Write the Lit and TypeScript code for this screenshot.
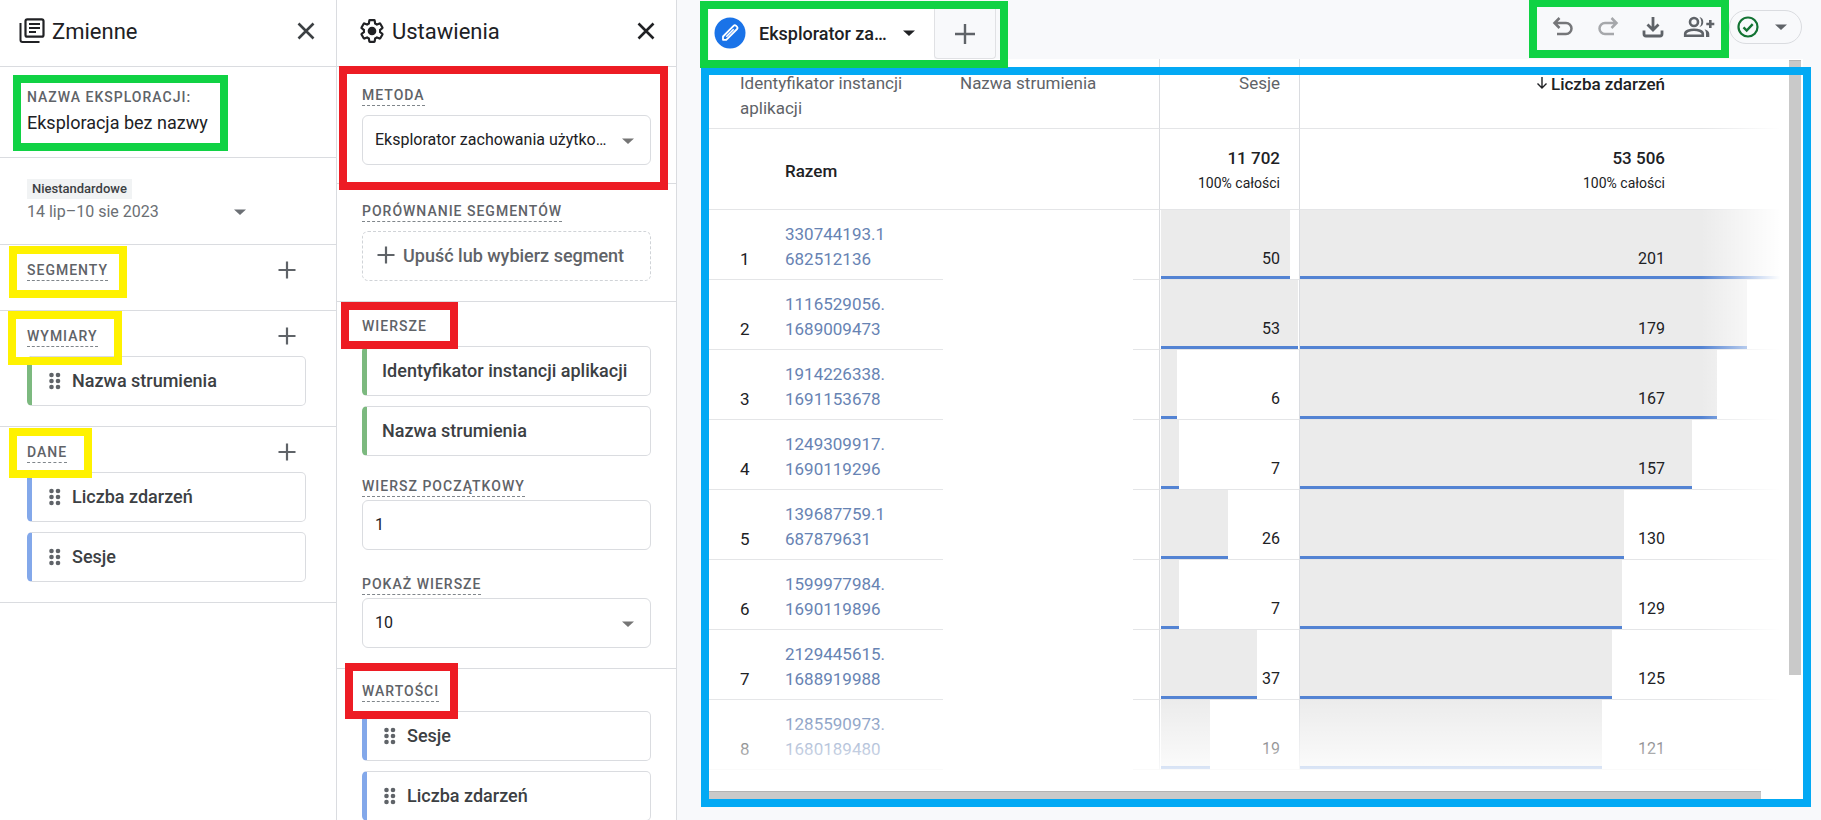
import { LitElement, html, css, svg, nothing } from "lit";
import { customElement, property } from "lit/decorators.js";

const icon = (size: number, box: string, body: unknown) =>
  html`<svg width=${size} height=${size} viewBox=${box} fill="none" aria-hidden="true">${body}</svg>`;

const closeIcon = icon(18, "0 0 18 18", svg`<path d="M1.5 1.5l15 15M16.5 1.5l-15 15" stroke="currentColor" stroke-width="2.6"/>`);
const plusIcon = icon(18, "0 0 18 18", svg`<path d="M9 .5v17M.5 9h17" stroke="currentColor" stroke-width="2.2"/>`);
const plusLarge = icon(22, "0 0 22 22", svg`<path d="M11 1v20M1 11h20" stroke="currentColor" stroke-width="2.4"/>`);
const caret = icon(12, "0 0 12 12", svg`<path d="M0 3.5h12l-6 5.5z" fill="currentColor"/>`);
const dragIcon = html`<svg width="12" height="18" viewBox="0 0 12 18" aria-hidden="true">
  ${[3, 9, 15].map((y) => svg`<circle cx="2.5" cy=${y} r="2.3" fill="#5f6368"/><circle cx="9" cy=${y} r="2.3" fill="#5f6368"/>`)}
</svg>`;
const libraryIcon = icon(26, "0 0 26 26", svg`
  <path d="M1.5 5v17a2 2 0 0 0 2 2H20.5" stroke="#202124" stroke-width="2"/>
  <rect x="6.5" y="1.3" width="18" height="17.4" rx="1.8" stroke="#202124" stroke-width="2.2"/>
  <path d="M10 6h11M10 10h11M10 14h7" stroke="#202124" stroke-width="2"/>`);
const gearIcon = icon(26, "0 0 24 24", svg`
  <path d="M19.43 12.98c.04-.32.07-.64.07-.98 0-.34-.03-.66-.07-.98l2.11-1.65c.19-.15.24-.42.12-.64l-2-3.46c-.09-.16-.26-.25-.44-.25-.06 0-.12.01-.17.03l-2.49 1c-.52-.4-1.08-.73-1.69-.98l-.38-2.65C14.46 2.18 14.25 2 14 2h-4c-.25 0-.46.18-.49.42l-.38 2.65c-.61.25-1.17.59-1.69.98l-2.49-1c-.06-.02-.12-.03-.18-.03-.17 0-.34.09-.43.25l-2 3.46c-.13.22-.07.49.12.64l2.11 1.65c-.04.32-.07.65-.07.98 0 .33.03.66.07.98l-2.11 1.65c-.19.15-.24.42-.12.64l2 3.46c.09.16.26.25.44.25.06 0 .12-.01.17-.03l2.49-1c.52.4 1.08.73 1.69.98l.38 2.65c.03.24.24.42.49.42h4c.25 0 .46-.18.49-.42l.38-2.65c.61-.25 1.17-.59 1.69-.98l2.49 1c.06.02.12.03.18.03.17 0 .34-.09.43-.25l2-3.46c.12-.22.07-.49-.12-.64z" stroke="#202124" stroke-width="2"/>
  <circle cx="12" cy="12" r="4" fill="#202124"/>`);
const pencilIcon = icon(32, "0 0 32 32", svg`
  <circle cx="16" cy="16" r="15.5" fill="#1a73e8"/>
  <path d="M9 22.8v-3.3L19.8 8.7a1.5 1.5 0 0 1 2.1 0l1.2 1.2a1.5 1.5 0 0 1 0 2.1L12.3 22.8z" fill="#1a73e8" stroke="#fff" stroke-width="1.8" stroke-linejoin="round"/>
  <path d="M12.3 19.7l7.4-7.4" stroke="#fff" stroke-width="1.6"/>`);
const undoIcon = icon(22, "0 0 22 22", svg`<path d="M7.5 2L2.5 7l5 5M2.5 7h11.5a5.5 5.5 0 0 1 0 11H5" stroke="#757679" stroke-width="2.5"/>`);
const redoIcon = icon(22, "0 0 22 22", svg`<path d="M14.5 2l5 5-5 5M19.5 7H8a5.5 5.5 0 0 0 0 11h9" stroke="#a6a8ab" stroke-width="2.5"/>`);
const downloadIcon = icon(22, "0 0 22 22", svg`<path d="M11 1v13M5.500 8.500l5.500 5.500 5.500-5.500M2 14.500v3.500a2 2 0 0 0 2 2h14a2 2 0 0 0 2-2v-3.500" stroke="#5f6368" stroke-width="2.8"/>`);
const shareIcon = html`<svg width="32" height="22" viewBox="0 0 32 22" fill="none" aria-hidden="true">
  <circle cx="11" cy="6" r="4" stroke="#5f6368" stroke-width="2.6"/>
  <path d="M2.2 19.8v-2c0-2.600 5-4.100 8.800-4.100s8.800 1.500 8.800 4.100v2z" stroke="#5f6368" stroke-width="2.6"/>
  <path d="M16.500 1a5.200 5.200 0 0 1 0 10a7.600 7.600 0 0 0 0-10zM21.500 13.300c2.800 1 4.800 2.400 4.800 4.500V21H23v-3.200c0-1.800-.5-3.200-1.500-4.500z" fill="#5f6368"/>
  <path d="M27.300 4v8M23.300 8h8" stroke="#5f6368" stroke-width="2.6"/>
</svg>`;
const checkIcon = icon(22, "0 0 22 22", svg`<circle cx="11" cy="11" r="9.5" stroke="#137333" stroke-width="2.2"/><path d="M6.5 11.3l3.2 3.2 6-6.3" stroke="#137333" stroke-width="2.4"/>`);
const sortIcon = icon(12, "0 0 12 12", svg`<path d="M6 0v10.5M1.500 6.500L6 11l4.500-4.500" stroke="#202124" stroke-width="1.4"/>`);

const base = css`
  * { box-sizing: border-box; }
  button, input, select { font: inherit; color: inherit; margin: 0; }
  button { background: none; border: 0; padding: 0; cursor: pointer; }
  svg { display: block; flex: none; }
  h2 { margin: 0; }
`;

@customElement("field-chip")
class FieldChip extends LitElement {
  @property() label = "";
  @property() kind: "dimension" | "metric" = "dimension";
  @property({ type: Boolean }) handle = false;

  static styles = [base, css`
    :host { display: block; }
    .chip {
      display: flex; align-items: center; gap: 11px; width: 100%; height: 50px;
      padding: 0 0 1px 15px; border: 1px solid #dadce0; border-left-width: 5px;
      border-radius: 5px; background: #fff; color: #3c4043;
      font-size: 18px; font-weight: 500; white-space: nowrap;
    }
    .dimension { border-left-color: #7cb97f; }
    .metric { border-left-color: #83a8ea; }
    .handle { padding-left: 17px; }
  `];

  render() {
    return html`<button class="chip ${this.kind} ${this.handle ? "handle" : ""}">
      ${this.handle ? dragIcon : nothing}${this.label}
    </button>`;
  }
}

interface Row { id: [string, string]; sessions: number; events: number; }

const rows: Row[] = [
  { id: ["330744193.1", "682512136"], sessions: 50, events: 201 },
  { id: ["1116529056.", "1689009473"], sessions: 53, events: 179 },
  { id: ["1914226338.", "1691153678"], sessions: 6, events: 167 },
  { id: ["1249309917.", "1690119296"], sessions: 7, events: 157 },
  { id: ["139687759.1", "687879631"], sessions: 26, events: 130 },
  { id: ["1599977984.", "1690119896"], sessions: 7, events: 129 },
  { id: ["2129445615.", "1688919988"], sessions: 37, events: 125 },
  { id: ["1285590973.", "1680189480"], sessions: 19, events: 121 },
];
const sessionsScale = 53;
const eventsScale = 196;

@customElement("data-grid")
class DataGrid extends LitElement {
  static styles = [base, css`
    :host {
      position: relative; display: grid; grid-template-columns: minmax(0, 1fr) 12px;
      grid-template-rows: minmax(0, 1fr) 8px; flex: 1; min-height: 0;
      padding-right: 2px; background: #fff;
    }
    .viewport { position: relative; overflow: hidden; }
    table { width: 100%; border-collapse: separate; border-spacing: 0; table-layout: fixed; font-size: 17px; line-height: 25px; color: #202124; }
    .c-num { width: 76px; }
    .c-id { width: 158px; }
    .c-name { width: 216px; }
    .c-sessions { width: 140px; }
    th, td { padding: 0; text-align: left; font-weight: 400; vertical-align: top; border-bottom: 1px solid #e4e5e7; }
    th:nth-last-child(-n+2), td:nth-last-child(-n+2) { border-left: 1px solid #dadce0; text-align: right; }
    thead th { height: 70px; padding-top: 12px; color: #5f6368; }
    thead .first { padding-left: 31px; padding-right: 20px; }
    thead .name { padding-left: 17px; }
    .sessions { padding-right: 19px; }
    .events { padding-right: 124px; }
    thead .sorted { color: #202124; font-weight: 500; }
    .sort { display: inline-flex; align-items: flex-start; gap: 3px; }
    .sort svg { margin-top: 5px; }
    .total > * { height: 81px; }
    .total .label { padding-top: 30px; font-weight: 500; }
    .total td:nth-last-child(-n+2) { padding-top: 17px; }
    .sum { font-weight: 500; }
    .share { font-size: 14px; }
    .row > td { height: 70px; }
    .row .num { padding: 37px 0 0 31px; }
    .row .id { padding-top: 12px; }
    .row .id a { color: #6783b3; text-decoration: none; }
    .row .blank { border-bottom: 0; background: linear-gradient(#e4e5e7, #e4e5e7) right bottom / 26px 1px no-repeat; }
    .row .measure { padding: 0; }
    .cell { display: grid; height: 69px; overflow: hidden; }
    .bar { grid-area: 1 / 1; background: #ebebeb; border-bottom: 3px solid #5383d3; }
    .value { grid-area: 1 / 1; padding-top: 36px; font-size: 16px; }
    .in-sessions .cell { padding: 0 1px; }
    .in-sessions .value { padding-right: 18px; }
    .in-events .value { padding-right: 124px; }
    .fade-right { position: absolute; inset: 0 0 0 auto; width: 88px; background: linear-gradient(90deg, #fff0, #fff 90%); }
    .fade-bottom { position: absolute; inset: auto 0 0 0; height: 94px; background: linear-gradient(#fff0, #fff 96%); }
    .vbar { height: 84%; margin-top: 1px; background: #c9c9c9; border-top: 1px solid #b4b4b4; }
    .hbar { width: 97.4%; background: #c9c9c9; border-top: 1px solid #b4b4b4; }
    .frame { position: absolute; inset: 8px -8px -8px -8px; border: 8px solid #03a9f4; pointer-events: none; }
  `];

  private measure(value: number, scale: number, kind: string) {
    return html`<td class="measure ${kind}"><div class="cell">
      <div class="bar" style="width:${(value / scale) * 100}%"></div>
      <div class="value">${value}</div>
    </div></td>`;
  }

  render() {
    return html`
      <div class="viewport">
        <table>
          <colgroup><col class="c-num"><col class="c-id"><col class="c-name"><col class="c-sessions"><col></colgroup>
          <thead><tr>
            <th class="first" colspan="2">Identyfikator instancji aplikacji</th>
            <th class="name">Nazwa strumienia</th>
            <th class="sessions">Sesje</th>
            <th class="events sorted"><span class="sort">${sortIcon}Liczba zdarzeń</span></th>
          </tr></thead>
          <tbody>
            <tr class="total">
              <td></td><td class="label">Razem</td><td></td>
              <td class="sessions"><div class="sum">11 702</div><div class="share">100% całości</div></td>
              <td class="events"><div class="sum">53 506</div><div class="share">100% całości</div></td>
            </tr>
            ${rows.map((r, i) => html`<tr class="row">
              <td class="num">${i + 1}</td>
              <td class="id"><a href="#">${r.id[0]}<br>${r.id[1]}</a></td>
              <td class="blank"></td>
              ${this.measure(r.sessions, sessionsScale, "in-sessions")}
              ${this.measure(r.events, eventsScale, "in-events")}
            </tr>`)}
          </tbody>
        </table>
        <div class="fade-right"></div>
        <div class="fade-bottom"></div>
      </div>
      <div class="vbar"></div>
      <div class="hbar"></div>
      <div class="frame"></div>`;
  }
}

@customElement("app-root")
class AppRoot extends LitElement {
  static styles = [base, css`
    :host {
      display: flex; height: 100vh; overflow: hidden; background: #f8f9fb;
      font-family: Roboto, "Liberation Sans", sans-serif; font-size: 17px; color: #202124;
    }
    .panel { flex: none; background: #fff; border-right: 1px solid #dadce0; }
    .variables { width: 337px; }
    .settings { width: 340px; }
    .head { display: flex; align-items: center; gap: 7px; height: 67px; padding: 0 21px 4px 19px; border-bottom: 1px solid #dadce0; }
    .settings .head { padding-left: 22px; }
    .head h2 { flex: 1; font-size: 22px; font-weight: 400; line-height: 28px; padding-top: 2px; }
    .head button { color: #3c4043; }
    .settings .head button { color: #202124; }
    section { position: relative; border-bottom: 1px solid #dadce0; padding: 15px 30px 20px 27px; }
    .settings section { padding: 18px 25px; }
    .settings .compare { padding: 17px 25px 20px; }
    .settings .rows { padding: 14px 25px 20px; }
    .settings .values { padding: 12px 25px 0; border: 0; }
    .caption { display: inline-block; font-size: 14px; font-weight: 500; line-height: 20px; letter-spacing: 1px; color: #5f6368; border-bottom: 1px dashed #80868b; }
    .plain { border-bottom-color: transparent; }
    .bar { display: flex; justify-content: space-between; align-items: flex-start; margin-bottom: 9px; padding-right: 10px; }
    .bar button { color: #5f6368; padding-top: 1px; }
    .stack { display: grid; gap: 10px; }
    .variables .name { padding-top: 20px; padding-bottom: 21px; }
    .name .caption { display: block; border: 0; }
    .name .title { line-height: 26px; margin-top: 3px; font-size: 18px; }
    .variables .date { padding-top: 21px; padding-bottom: 20px; }
    .range { display: grid; grid-template-columns: 1fr 12px; align-items: center; width: 219px; text-align: left; color: #6b6f74; font-size: 16px; line-height: 25px; }
    .badge { grid-column: 1 / 3; justify-self: start; padding: 0 5px; background: #f1f3f4; color: #3c4043; font-size: 13px; font-weight: 500; line-height: 20px; }
    .box { position: relative; display: block; margin-top: 9px; }
    .box svg { position: absolute; right: 17px; top: 20px; color: #757575; pointer-events: none; }
    .box input, .box select {
      display: block; width: 100%; height: 50px; padding: 0 42px 2px 12px; border: 1px solid #dadce0;
      border-radius: 6px; background: #fff; appearance: none; outline: 0; font-size: 16px;
      text-overflow: ellipsis; white-space: nowrap; overflow: hidden;
    }
    .rows .box { margin-top: 3px; }
    .start { margin-top: 20px; }
    .count { margin-top: 24px; }
    .drop { display: flex; align-items: center; gap: 8px; width: 100%; height: 50px; margin-top: 9px; padding: 0 0 2px 14px; border: 1px dashed #d0d3d7; border-radius: 6px; color: #5f6368; font-size: 18px; font-weight: 500; white-space: nowrap; }
    .rows .stack, .values .stack { margin-top: 9px; }
    .caption-row { display: flex; }
    main { flex: 1; min-width: 0; display: flex; flex-direction: column; padding: 0 18px 21px 32px; }
    .top { display: flex; justify-content: space-between; height: 59px; }
    .tabs { position: relative; display: flex; padding-top: 9px; }
    .tab { display: flex; align-items: center; width: 225px; padding: 0 19px 2px 5px; background: #fff; font-size: 18px; font-weight: 500; }
    .tab span { flex: 1; text-align: left; padding-left: 13px; white-space: nowrap; }
    .add { display: grid; place-items: center; width: 62px; color: #5f6368; border: 1px solid #e0e1e4; border-top: 0; border-radius: 0 0 4px 4px; }
    .tools { position: relative; display: flex; gap: 23px; align-items: center; height: 54px; margin-right: 1px; }
    .share { margin: 0 -9px 0 -4px; }
    .tools .status { display: flex; align-items: center; gap: 16px; height: 34px; width: 73px; padding-left: 7px; border: 1px solid #dadce0; border-radius: 17px; color: #5f6368; }
    .mark { position: absolute; z-index: 2; border: 8px solid; pointer-events: none; }
    .green { border-color: #10d244; }
    .yellow { border-color: #fff200; }
    .red { border-color: #ed1c24; }
    .m-name { left: 13px; top: 8px; width: 215px; height: 76px; }
    .m-segments { left: 9px; top: 1px; width: 118px; height: 52px; }
    .m-dimensions { left: 8px; top: 0; width: 114px; height: 54px; }
    .m-metrics { left: 9px; top: 1px; width: 83px; height: 50px; }
    .m-method { left: 2px; top: -1px; width: 329px; height: 124px; }
    .m-rows { left: 4px; top: 0; width: 117px; height: 47px; }
    .m-values { left: 8px; top: -6px; width: 113px; height: 56px; }
    .m-tabs { left: -9px; top: 1px; width: 308px; height: 67px; }
    .m-tools { right: 73px; top: -1px; width: 200px; height: 59px; }
  `];

  render() {
    return html`
      <aside class="panel variables">
        <div class="head">${libraryIcon}<h2>Zmienne</h2><button aria-label="Zamknij zmienne">${closeIcon}</button></div>
        <section class="name">
          <div class="caption">NAZWA EKSPLORACJI:</div>
          <div class="title">Eksploracja bez nazwy</div>
          <div class="mark green m-name"></div>
        </section>
        <section class="date">
          <button class="range"><span class="badge">Niestandardowe</span><span>14 lip–10 sie 2023</span>${caret}</button>
        </section>
        <section>
          <div class="bar"><span class="caption">SEGMENTY</span><button aria-label="Dodaj segment">${plusIcon}</button></div>
          <div class="mark yellow m-segments"></div>
        </section>
        <section>
          <div class="bar"><span class="caption">WYMIARY</span><button aria-label="Dodaj wymiar">${plusIcon}</button></div>
          <field-chip handle label="Nazwa strumienia"></field-chip>
          <div class="mark yellow m-dimensions"></div>
        </section>
        <section>
          <div class="bar"><span class="caption">DANE</span><button aria-label="Dodaj dane">${plusIcon}</button></div>
          <div class="stack">
            <field-chip handle kind="metric" label="Liczba zdarzeń"></field-chip>
            <field-chip handle kind="metric" label="Sesje"></field-chip>
          </div>
          <div class="mark yellow m-metrics"></div>
        </section>
      </aside>

      <aside class="panel settings">
        <div class="head">${gearIcon}<h2>Ustawienia</h2><button aria-label="Zamknij ustawienia">${closeIcon}</button></div>
        <section>
          <div class="caption-row"><label class="caption" for="method">METODA</label></div>
          <div class="box">
            <select id="method"><option>Eksplorator zachowania użytkowników</option></select>${caret}
          </div>
          <div class="mark red m-method"></div>
        </section>
        <section class="compare">
          <div class="caption-row"><span class="caption">PORÓWNANIE SEGMENTÓW</span></div>
          <button class="drop">${plusIcon}Upuść lub wybierz segment</button>
        </section>
        <section class="rows">
          <div class="caption-row"><span class="caption plain">WIERSZE</span></div>
          <div class="stack">
            <field-chip label="Identyfikator instancji aplikacji"></field-chip>
            <field-chip label="Nazwa strumienia"></field-chip>
          </div>
          <div class="caption-row start"><label class="caption" for="start">WIERSZ POCZĄTKOWY</label></div>
          <div class="box"><input id="start" value="1"></div>
          <div class="caption-row count"><label class="caption" for="count">POKAŻ WIERSZE</label></div>
          <div class="box"><select id="count"><option>10</option></select>${caret}</div>
          <div class="mark red m-rows"></div>
        </section>
        <section class="values">
          <div class="caption-row"><span class="caption">WARTOŚCI</span></div>
          <div class="stack">
            <field-chip handle kind="metric" label="Sesje"></field-chip>
            <field-chip handle kind="metric" label="Liczba zdarzeń"></field-chip>
          </div>
          <div class="mark red m-values"></div>
        </section>
      </aside>

      <main>
        <div class="top">
          <div class="tabs">
            <button class="tab">${pencilIcon}<span>Eksplorator za…</span>${caret}</button>
            <button class="add" aria-label="Dodaj kartę">${plusLarge}</button>
            <div class="mark green m-tabs"></div>
          </div>
          <div class="tools">
            <button aria-label="Cofnij">${undoIcon}</button>
            <button aria-label="Ponów">${redoIcon}</button>
            <button aria-label="Pobierz">${downloadIcon}</button>
            <button class="share" aria-label="Udostępnij">${shareIcon}</button>
            <button class="status" aria-label="Stan danych">${checkIcon}${caret}</button>
            <div class="mark green m-tools"></div>
          </div>
        </div>
        <data-grid></data-grid>
      </main>`;
  }
}
